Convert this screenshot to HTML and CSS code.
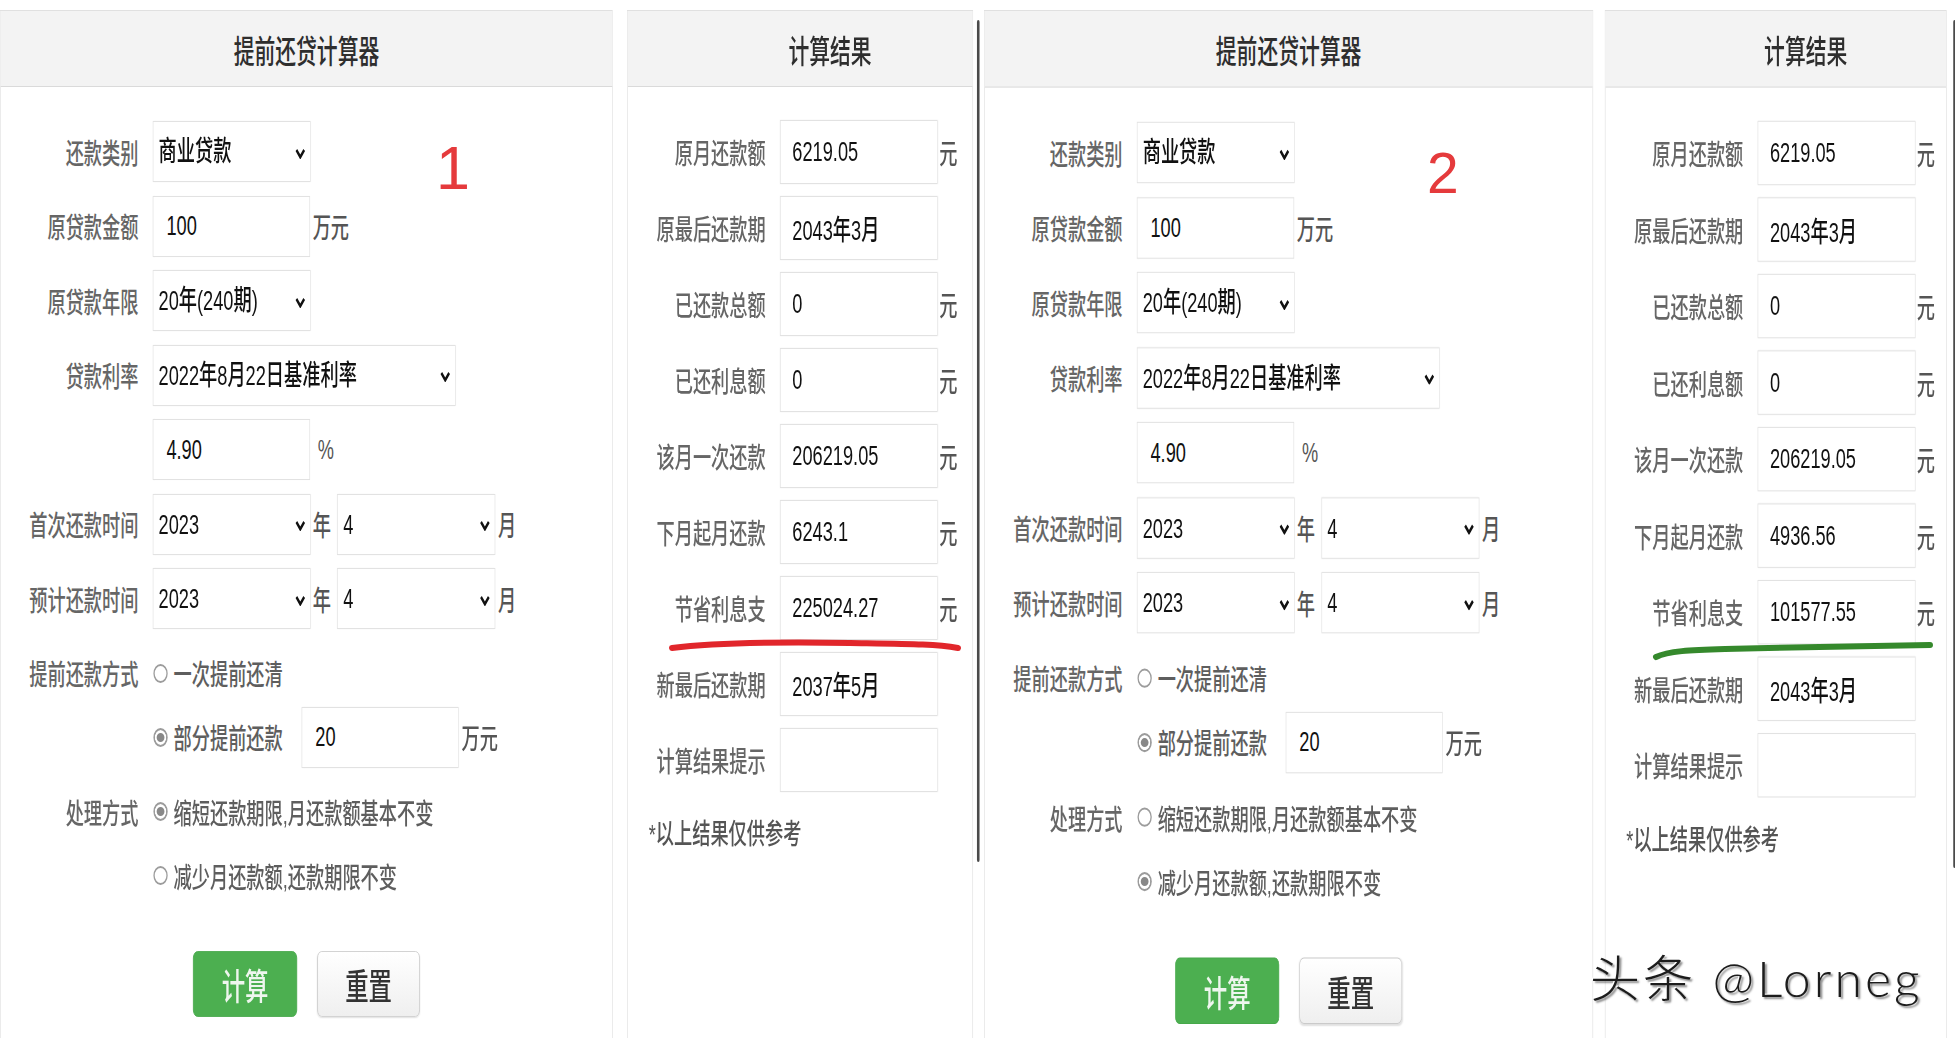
FILE: index.html
```html
<!DOCTYPE html>
<html lang="zh-CN">
<head>
    <meta charset="UTF-8">
    <meta name="viewport" content="width=device-width, initial-scale=1.0">
    <title>提前还贷计算器</title>
    <link rel="stylesheet" href="styles.css">
</head>
<body>
    <div class="collage">
        <!-- first run -->
        <section class="shot">
            <div class="panel calc">
                <div class="panel-head">提前还贷计算器</div>
                <div class="panel-body">
                    <div class="row">
                        <span class="lbl">还款类别</span>
                        <span class="select-wrap">
                            <select class="field">
                                <option>商业贷款</option>
                                <option>公积金贷款</option>
                            </select>
                            <svg class="caret" viewBox="0 0 16 11"><polyline points="2,2 8,9 14,2"/></svg>
                        </span>
                    </div>
                    <div class="row">
                        <span class="lbl">原贷款金额</span>
                        <input class="field" type="text" value="100">
                        <span class="unit">万元</span>
                    </div>
                    <div class="row">
                        <span class="lbl">原贷款年限</span>
                        <span class="select-wrap">
                            <select class="field">
                                <option>20年(240期)</option>
                            </select>
                            <svg class="caret" viewBox="0 0 16 11"><polyline points="2,2 8,9 14,2"/></svg>
                        </span>
                    </div>
                    <div class="row">
                        <span class="lbl">贷款利率</span>
                        <span class="select-wrap">
                            <select class="field wide">
                                <option>2022年8月22日基准利率</option>
                            </select>
                            <svg class="caret" viewBox="0 0 16 11"><polyline points="2,2 8,9 14,2"/></svg>
                        </span>
                    </div>
                    <div class="row">
                        <span class="lbl"></span>
                        <input class="field" type="text" value="4.90">
                        <span class="unit pct">%</span>
                    </div>
                    <div class="row">
                        <span class="lbl">首次还款时间</span>
                        <span class="select-wrap">
                            <select class="field"><option>2023</option></select>
                            <svg class="caret" viewBox="0 0 16 11"><polyline points="2,2 8,9 14,2"/></svg>
                        </span>
                        <span class="unit year">年</span>
                        <span class="select-wrap">
                            <select class="field"><option>4</option></select>
                            <svg class="caret" viewBox="0 0 16 11"><polyline points="2,2 8,9 14,2"/></svg>
                        </span>
                        <span class="unit">月</span>
                    </div>
                    <div class="row">
                        <span class="lbl">预计还款时间</span>
                        <span class="select-wrap">
                            <select class="field"><option>2023</option></select>
                            <svg class="caret" viewBox="0 0 16 11"><polyline points="2,2 8,9 14,2"/></svg>
                        </span>
                        <span class="unit year">年</span>
                        <span class="select-wrap">
                            <select class="field"><option>4</option></select>
                            <svg class="caret" viewBox="0 0 16 11"><polyline points="2,2 8,9 14,2"/></svg>
                        </span>
                        <span class="unit">月</span>
                    </div>
                    <div class="row tight">
                        <span class="lbl">提前还款方式</span>
                        <label class="opt"><input type="radio" name="way-1">一次提前还清</label>
                    </div>
                    <div class="row">
                        <span class="lbl"></span>
                        <label class="opt"><input type="radio" name="way-1" checked>部分提前还款</label>
                        <input class="field part" type="text" value="20">
                        <span class="unit">万元</span>
                    </div>
                    <div class="row tight">
                        <span class="lbl">处理方式</span>
                        <label class="opt"><input type="radio" name="mode-1" checked>缩短还款期限,月还款额基本不变</label>
                    </div>
                    <div class="row">
                        <span class="lbl"></span>
                        <label class="opt"><input type="radio" name="mode-1">减少月还款额,还款期限不变</label>
                    </div>
                    <div class="actions">
                        <button type="button" class="btn btn-go">计算</button>
                        <button type="button" class="btn btn-reset">重置</button>
                    </div>
                </div>
            </div>

            <div class="panel result">
                <div class="panel-head">计算结果</div>
                <div class="panel-body">
                    <div class="row"><span class="lbl">原月还款额</span><input class="field" readonly value="6219.05"><span class="unit">元</span></div>
                    <div class="row"><span class="lbl">原最后还款期</span><input class="field" readonly value="2043年3月"></div>
                    <div class="row"><span class="lbl">已还款总额</span><input class="field" readonly value="0"><span class="unit">元</span></div>
                    <div class="row"><span class="lbl">已还利息额</span><input class="field" readonly value="0"><span class="unit">元</span></div>
                    <div class="row"><span class="lbl">该月一次还款</span><input class="field" readonly value="206219.05"><span class="unit">元</span></div>
                    <div class="row"><span class="lbl">下月起月还款</span><input class="field" readonly value="6243.1"><span class="unit">元</span></div>
                    <div class="row"><span class="lbl">节省利息支</span><input class="field" readonly value="225024.27"><span class="unit">元</span></div>
                    <div class="row"><span class="lbl">新最后还款期</span><input class="field" readonly value="2037年5月"></div>
                    <div class="row"><span class="lbl">计算结果提示</span><input class="field" readonly value=""></div>
                    <p class="note">*以上结果仅供参考</p>
                </div>
            </div>
            <div class="edge"></div>
        </section>

        <!-- second run -->
        <section class="shot shot-2">
            <div class="panel calc">
                <div class="panel-head">提前还贷计算器</div>
                <div class="panel-body">
                    <div class="row">
                        <span class="lbl">还款类别</span>
                        <span class="select-wrap">
                            <select class="field">
                                <option>商业贷款</option>
                                <option>公积金贷款</option>
                            </select>
                            <svg class="caret" viewBox="0 0 16 11"><polyline points="2,2 8,9 14,2"/></svg>
                        </span>
                    </div>
                    <div class="row">
                        <span class="lbl">原贷款金额</span>
                        <input class="field" type="text" value="100">
                        <span class="unit">万元</span>
                    </div>
                    <div class="row">
                        <span class="lbl">原贷款年限</span>
                        <span class="select-wrap">
                            <select class="field">
                                <option>20年(240期)</option>
                            </select>
                            <svg class="caret" viewBox="0 0 16 11"><polyline points="2,2 8,9 14,2"/></svg>
                        </span>
                    </div>
                    <div class="row">
                        <span class="lbl">贷款利率</span>
                        <span class="select-wrap">
                            <select class="field wide">
                                <option>2022年8月22日基准利率</option>
                            </select>
                            <svg class="caret" viewBox="0 0 16 11"><polyline points="2,2 8,9 14,2"/></svg>
                        </span>
                    </div>
                    <div class="row">
                        <span class="lbl"></span>
                        <input class="field" type="text" value="4.90">
                        <span class="unit pct">%</span>
                    </div>
                    <div class="row">
                        <span class="lbl">首次还款时间</span>
                        <span class="select-wrap">
                            <select class="field"><option>2023</option></select>
                            <svg class="caret" viewBox="0 0 16 11"><polyline points="2,2 8,9 14,2"/></svg>
                        </span>
                        <span class="unit year">年</span>
                        <span class="select-wrap">
                            <select class="field"><option>4</option></select>
                            <svg class="caret" viewBox="0 0 16 11"><polyline points="2,2 8,9 14,2"/></svg>
                        </span>
                        <span class="unit">月</span>
                    </div>
                    <div class="row">
                        <span class="lbl">预计还款时间</span>
                        <span class="select-wrap">
                            <select class="field"><option>2023</option></select>
                            <svg class="caret" viewBox="0 0 16 11"><polyline points="2,2 8,9 14,2"/></svg>
                        </span>
                        <span class="unit year">年</span>
                        <span class="select-wrap">
                            <select class="field"><option>4</option></select>
                            <svg class="caret" viewBox="0 0 16 11"><polyline points="2,2 8,9 14,2"/></svg>
                        </span>
                        <span class="unit">月</span>
                    </div>
                    <div class="row tight">
                        <span class="lbl">提前还款方式</span>
                        <label class="opt"><input type="radio" name="way-2">一次提前还清</label>
                    </div>
                    <div class="row">
                        <span class="lbl"></span>
                        <label class="opt"><input type="radio" name="way-2" checked>部分提前还款</label>
                        <input class="field part" type="text" value="20">
                        <span class="unit">万元</span>
                    </div>
                    <div class="row tight">
                        <span class="lbl">处理方式</span>
                        <label class="opt"><input type="radio" name="mode-2">缩短还款期限,月还款额基本不变</label>
                    </div>
                    <div class="row">
                        <span class="lbl"></span>
                        <label class="opt"><input type="radio" name="mode-2" checked>减少月还款额,还款期限不变</label>
                    </div>
                    <div class="actions">
                        <button type="button" class="btn btn-go">计算</button>
                        <button type="button" class="btn btn-reset">重置</button>
                    </div>
                </div>
            </div>

            <div class="panel result">
                <div class="panel-head">计算结果</div>
                <div class="panel-body">
                    <div class="row"><span class="lbl">原月还款额</span><input class="field" readonly value="6219.05"><span class="unit">元</span></div>
                    <div class="row"><span class="lbl">原最后还款期</span><input class="field" readonly value="2043年3月"></div>
                    <div class="row"><span class="lbl">已还款总额</span><input class="field" readonly value="0"><span class="unit">元</span></div>
                    <div class="row"><span class="lbl">已还利息额</span><input class="field" readonly value="0"><span class="unit">元</span></div>
                    <div class="row"><span class="lbl">该月一次还款</span><input class="field" readonly value="206219.05"><span class="unit">元</span></div>
                    <div class="row"><span class="lbl">下月起月还款</span><input class="field" readonly value="4936.56"><span class="unit">元</span></div>
                    <div class="row"><span class="lbl">节省利息支</span><input class="field" readonly value="101577.55"><span class="unit">元</span></div>
                    <div class="row"><span class="lbl">新最后还款期</span><input class="field" readonly value="2043年3月"></div>
                    <div class="row"><span class="lbl">计算结果提示</span><input class="field" readonly value=""></div>
                    <p class="note">*以上结果仅供参考</p>
                </div>
            </div>
            <div class="edge"></div>
        </section>
    </div>

    <!-- hand-drawn marks on top of the screenshots -->
    <span class="tag tag-1">1</span>
    <span class="tag tag-2">2</span>
    <svg class="strokes" width="1955" height="1038" viewBox="0 0 1955 1038">
        <path class="stroke-red" d="M672 648 C 720 642, 790 642, 850 643 S 935 644, 958 648"/>
        <path class="stroke-green" d="M1656 657 C 1668 651, 1690 650, 1725 649 C 1800 647, 1880 646, 1930 645"/>
    </svg>
    <div class="watermark">头条 @Lorneg</div>
</body>
</html>
```

FILE: styles.css
```css
* {
    box-sizing: border-box;
}
html, body {
    margin: 0;
    overflow: hidden;
    background: #fff;
}
body {
    position: relative;
    width: 1955px;
    height: 1038px;
    font-family: "Liberation Sans", "Noto Sans CJK SC", sans-serif;
}

/* the screenshots are squeezed sideways, so lay out wide and squeeze */
.collage {
    display: flex;
    width: 3020px;
    padding-top: 10px;
    font-weight: 500;
    transform: scaleX(0.65);
    transform-origin: 0 0;
}
.shot {
    display: flex;
    align-items: flex-start;
    flex: none;
}
.shot-2 {
    margin-left: 7px;
    transform: scaleY(1.007);
    transform-origin: 0 0;
}

.panel {
    flex: none;
    height: 1100px;
    border: 1px solid #e0e0e0;
    background: #fff;
}
.calc {
    width: 943px;
}
.result {
    width: 532px;
    margin-left: 22px;
}
.shot-2 .calc {
    width: 937px;
}
.shot-2 .result {
    width: 526px;
    margin-left: 18px;
}
.edge {
    flex: none;
    width: 4px;
    height: 842px;
    margin-top: 10px;
    margin-left: 6px;
    background: #4a4a4a;
    border-radius: 2px;
}
.shot-2 .edge {
    margin-left: 10px;
}

.panel-head {
    height: 76px;
    display: flex;
    align-items: center;
    justify-content: center;
    background: #f3f3f3;
    border-bottom: 1px solid #dadada;
    font-size: 32px;
    color: #2e2e2e;
}
.result .panel-head {
    padding-left: 92px;
}
.calc .panel-body {
    padding-top: 34px;
}
.result .panel-body {
    padding-top: 33px;
}

.row {
    display: flex;
    align-items: center;
    height: 61px;
    margin-bottom: 13.5px;
}
.row.tight {
    margin-bottom: 3px;
}
.result .row {
    height: 64px;
    margin-bottom: 12px;
}
.lbl {
    flex: none;
    width: 212px;
    margin-right: 22px;
    text-align: right;
    font-size: 28px;
    color: #666;
}

.field {
    flex: none;
    width: 243px;
    height: 100%;
    margin: 0;
    border: 1px solid #e2e2e2;
    border-radius: 0;
    background: #fff;
    box-shadow: 0 0 2px rgba(0, 0, 0, 0.06);
    font-family: inherit;
    font-size: 28px;
    font-weight: inherit;
    color: #111;
    outline: none;
}
input.field {
    width: 242px;
    padding: 0 0 0 20px;
}
.result input.field {
    width: 243px;
    padding-left: 18px;
}
select.field {
    appearance: none;
    -webkit-appearance: none;
    padding: 0 30px 0 8px;
}
select.wide {
    width: 466px;
}
.select-wrap {
    position: relative;
    display: flex;
    height: 100%;
}
.caret {
    position: absolute;
    right: 8px;
    top: 50%;
    width: 16px;
    height: 11px;
    margin-top: -4px;
    pointer-events: none;
}
.caret polyline {
    fill: none;
    stroke: #111;
    stroke-width: 3.4;
}

.unit {
    margin-left: 4px;
    font-size: 28px;
    color: #555;
}
.unit.pct {
    margin-left: 12px;
}
.unit.year {
    margin-left: 3px;
    margin-right: 10px;
}
.result .unit {
    margin-left: 2px;
}

.opt {
    display: flex;
    align-items: center;
    font-size: 28px;
    color: #5e5e5e;
}
.opt input {
    appearance: none;
    -webkit-appearance: none;
    width: 22px;
    height: 19px;
    margin: 0 9px 0 1px;
    border: 2px solid #9c9c9c;
    border-radius: 50%;
    background: #fff;
}
.opt input:checked {
    background: #888;
    box-shadow: inset 0 0 0 3px #fff;
}
.field.part {
    margin-left: 29px;
}

.actions {
    display: flex;
    justify-content: center;
    gap: 31px;
    margin-top: 45px;
}
.btn {
    height: 66px;
    border-radius: 7px;
    font-family: inherit;
    font-size: 36px;
    font-weight: inherit;
    cursor: pointer;
}
.btn-go {
    width: 160px;
    border: 1px solid #46a84a;
    background: #4caf50;
    color: #eef6ee;
}
.btn-reset {
    width: 158px;
    border: 1px solid #cacaca;
    background: linear-gradient(#ffffff, #efefef);
    box-shadow: 0 1px 2px rgba(0, 0, 0, 0.12);
    color: #333;
}

.note {
    margin: 23px 0 0;
    padding-left: 32px;
    line-height: 40px;
    font-size: 28px;
    color: #555;
}

/* marks drawn over the picture */
.tag {
    position: absolute;
    font-family: "Liberation Sans", sans-serif;
    line-height: 1;
    color: #e53a3c;
}
.tag-1 {
    left: 436px;
    top: 138px;
    font-size: 61px;
}
.tag-2 {
    left: 1427px;
    top: 145px;
    font-size: 57px;
}
.strokes {
    position: absolute;
    left: 0;
    top: 0;
    pointer-events: none;
}
.strokes path {
    fill: none;
    stroke-width: 6;
    stroke-linecap: round;
}
.stroke-red {
    stroke: #e1262b;
}
.stroke-green {
    stroke: #35892c;
}
.watermark {
    position: absolute;
    left: 1590px;
    top: 953px;
    line-height: 50px;
    font-family: "Lato", "Noto Sans CJK SC", sans-serif;
    font-size: 50px;
    font-weight: 300;
    letter-spacing: 3px;
    color: #1c1c1c;
    text-shadow: -1px -1px 0 #fff, 2px 2px 2px rgba(0, 0, 0, 0.45);
    white-space: nowrap;
}
```
